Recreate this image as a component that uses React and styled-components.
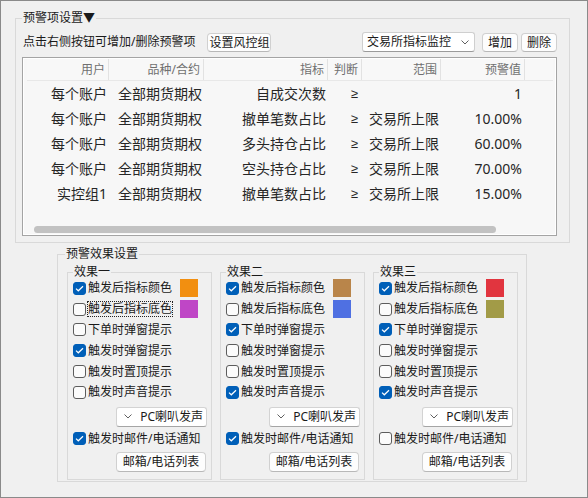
import React from 'react';
import styled, { createGlobalStyle } from 'styled-components';

const GlobalStyle = createGlobalStyle`
  html, body {
    margin: 0;
    padding: 0;
    background: #f0f0f0;
  }
  body {
    font-family: "Noto Sans", "Noto Sans CJK SC", sans-serif;
  }
  * {
    box-sizing: border-box;
  }
`;

const Window = styled.div`
  width: 588px;
  height: 498px;
  border: 1px solid #8a8a8a;
  background: #f0f0f0;
  padding: 10px 17px 0 14px;
  color: #1a1a1a;
  font-size: 12px;
`;

const Group = styled.fieldset`
  margin: 0;
  min-width: 0;
  border: 1px solid #d9d9d9;
`;

const Legend = styled.legend`
  padding: 0 1px;
  margin-left: ${p => p.ml ?? 0}px;
  font-size: 12px;
  line-height: ${p => p.lh || 14}px;
  color: #1a1a1a;
`;

const ItemGroup = styled(Group)`
  padding: 7px 12px 6px 6px;
`;

const Toolbar = styled.div`
  display: flex;
  align-items: center;
  height: 20px;
  padding-left: 1px;
`;

const Hint = styled.span`
  line-height: 20px;
`;

const Button = styled.button`
  height: 19px;
  padding: 0 ${p => p.px ?? 5}px;
  margin-left: ${p => p.ml ?? 0}px;
  border: 1px solid #d0d0d0;
  border-bottom-color: #b8b8b8;
  border-radius: 4px;
  background: #fdfdfd;
  font: inherit;
  font-size: 12px;
  line-height: 17px;
  color: #1a1a1a;
  white-space: nowrap;
`;

const Select = styled.div`
  display: flex;
  align-items: center;
  justify-content: space-between;
  width: 113px;
  height: 20px;
  margin-left: auto;
  margin-right: 7px;
  padding: 0 5px 0 4px;
  border: 1px solid #cfcfcf;
  border-bottom-color: #9a9a9a;
  border-radius: 3px;
  background: #ffffff;
  line-height: 18px;
`;

const Table = styled.div`
  display: flex;
  flex-direction: column;
  height: 179px;
  margin-top: 5px;
  border: 1px solid #a4a4a4;
  box-shadow: inset 0 0 0 1px #ffffff;
  background: #f7f7f7;
  padding: 1px 3px 2px 4px;
`;

const columns = '82px 95px 124px 34px 79px 84px 1fr';

const HeaderRow = styled.div`
  display: grid;
  grid-template-columns: ${columns};
  height: 22px;
  border-bottom: 1px solid #e8e8e8;
  background: #f8f8f8;
`;

const HeaderCell = styled.div`
  padding-right: 3px;
  text-align: right;
  font-size: 12px;
  line-height: 21px;
  color: #707070;
  border-right: ${p => (p.last ? 'none' : '1px solid #e2e2e2')};
`;

const Body = styled.div`
  flex: 1;
`;

const Row = styled.div`
  display: grid;
  grid-template-columns: ${columns};
  height: 25px;
`;

const Cell = styled.div`
  padding-right: ${p => p.pr ?? 2}px;
  text-align: right;
  font-size: 14px;
  line-height: 25px;
  color: #262626;
  white-space: nowrap;
`;

const SignCell = styled(Cell)`
  font-family: "Liberation Sans", sans-serif;
  font-size: 13px;
`;

const ScrollTrack = styled.div`
  height: 7px;
  padding-left: 7px;
`;

const Thumb = styled.div`
  width: 462px;
  height: 7px;
  border-radius: 4px;
  background: #c2c2c2;
`;

const EffectGroup = styled(Group)`
  width: 470px;
  margin: 4px 0 0 42px;
  padding: 5px 7px 1px 9px;
`;

const EffectRow = styled.div`
  display: flex;
  gap: 8px;
`;

const EffectBox = styled(Group)`
  display: flex;
  flex-direction: column;
  width: 145px;
  padding: 0 4px 7px 5px;
`;

const CheckRow = styled.div`
  display: flex;
  align-items: center;
  height: 20.8px;
  margin-top: ${p => p.mt ?? 0}px;
`;

const Box = styled.span`
  display: inline-flex;
  align-items: center;
  justify-content: center;
  width: 13px;
  height: 13px;
  flex-shrink: 0;
  border-radius: 3px;
  border: 1px solid ${p => (p.checked ? '#005fb8' : '#5c5c5c')};
  background: ${p => (p.checked ? '#005fb8' : '#fbfbfb')};
`;

const Label = styled.span`
  margin-left: 2px;
  line-height: 14px;
  white-space: nowrap;
  outline: ${p => (p.focused ? '1px dotted #222' : 'none')};
`;

const Swatch = styled.span`
  width: 18px;
  height: 18px;
  margin-left: auto;
  margin-right: 9px;
  background: ${p => p.color};
`;

const SmallSelect = styled.div`
  display: flex;
  align-items: center;
  justify-content: space-between;
  align-self: flex-end;
  width: 91px;
  height: 20px;
  margin-top: 4px;
  padding: 0 3px 0 7px;
  border: 1px solid #d3d3d3;
  border-bottom-color: #a5a5a5;
  border-radius: 3px;
  background: #ffffff;
  line-height: 18px;
`;

const ListButton = styled(Button)`
  align-self: flex-end;
  width: 90px;
  height: 20px;
  margin-top: 3px;
  margin-right: 1px;
  padding: 0;
  line-height: 18px;
`;

const Chevron = () => (
  <svg width="8" height="5" viewBox="0 0 8 5">
    <polyline points="0.5,0.5 4,4 7.5,0.5" fill="none" stroke="#606060" strokeWidth="1" />
  </svg>
);

const Check = () => (
  <svg width="9" height="7" viewBox="0 0 9 7">
    <polyline points="1,3.6 3.3,5.8 8,1.2" fill="none" stroke="#ffffff" strokeWidth="1.2" />
  </svg>
);

const Checkbox = ({ checked, label, focused, color }) => (
  <CheckRow>
    <Box checked={checked}>{checked && <Check />}</Box>
    <Label focused={focused}>{label}</Label>
    {color && <Swatch color={color} />}
  </CheckRow>
);

const headers = ['用户', '品种/合约', '指标', '判断', '范围', '预警值'];

const rows = [
  ['每个账户', '全部期货期权', '自成交次数', '≥', '', '1'],
  ['每个账户', '全部期货期权', '撤单笔数占比', '≥', '交易所上限', '10.00%'],
  ['每个账户', '全部期货期权', '多头持仓占比', '≥', '交易所上限', '60.00%'],
  ['每个账户', '全部期货期权', '空头持仓占比', '≥', '交易所上限', '70.00%'],
  ['实控组1', '全部期货期权', '撤单笔数占比', '≥', '交易所上限', '15.00%'],
];

const labels = ['触发后指标颜色', '触发后指标底色', '下单时弹窗提示', '触发时弹窗提示', '触发时置顶提示', '触发时声音提示'];

const effects = [
  { title: '效果一', colors: ['#f28f10', '#bf46c6'], checks: [1, 0, 0, 1, 0, 0], mail: 1, focus: 1 },
  { title: '效果二', colors: ['#b9854a', '#4f70e2'], checks: [1, 0, 1, 0, 0, 1], mail: 1 },
  { title: '效果三', colors: ['#e1353f', '#a29b47'], checks: [1, 0, 1, 0, 0, 1], mail: 0 },
];

export default function App() {
  return (
    <Window>
      <GlobalStyle />
      <ItemGroup>
        <Legend>预警项设置▼</Legend>
        <Toolbar>
          <Hint>点击右侧按钮可增加/删除预警项</Hint>
          <Button ml={12} px={1}>设置风控组</Button>
          <Select>
            <span>交易所指标监控</span>
            <Chevron />
          </Select>
          <Button>增加</Button>
          <Button ml={3}>删除</Button>
        </Toolbar>
        <Table>
          <HeaderRow>
            {headers.map(h => (
              <HeaderCell key={h}>{h}</HeaderCell>
            ))}
            <HeaderCell last />
          </HeaderRow>
          <Body>
            {rows.map((r, i) => (
              <Row key={i}>
                {r.map((c, j) =>
                  j === 3 ? (
                    <SignCell key={j} pr={4}>{c}</SignCell>
                  ) : (
                    <Cell key={j} pr={j === 5 ? 3 : 2}>{c}</Cell>
                  )
                )}
              </Row>
            ))}
          </Body>
          <ScrollTrack>
            <Thumb />
          </ScrollTrack>
        </Table>
      </ItemGroup>

      <EffectGroup>
        <Legend ml={-2}>预警效果设置</Legend>
        <EffectRow>
          {effects.map(e => (
            <EffectBox key={e.title}>
              <Legend lh={12}>{e.title}</Legend>
              {labels.map((l, i) => (
                <Checkbox
                  key={l}
                  label={l}
                  checked={!!e.checks[i]}
                  focused={e.focus && i === 1}
                  color={i < 2 ? e.colors[i] : null}
                />
              ))}
              <SmallSelect>
                <Chevron />
                <span>PC喇叭发声</span>
              </SmallSelect>
              <CheckRow mt={1.5}>
                <Box checked={!!e.mail}>{!!e.mail && <Check />}</Box>
                <Label>触发时邮件/电话通知</Label>
              </CheckRow>
              <ListButton>邮箱/电话列表</ListButton>
            </EffectBox>
          ))}
        </EffectRow>
      </EffectGroup>
    </Window>
  );
}
